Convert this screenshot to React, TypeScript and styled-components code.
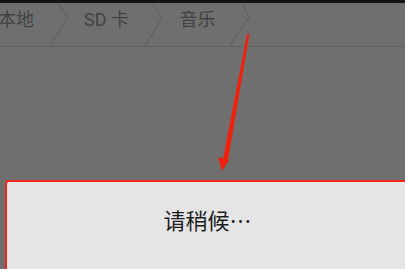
import styled, { createGlobalStyle } from "styled-components";

const GlobalStyle = createGlobalStyle`
  html, body {
    margin: 0;
    padding: 0;
    background: #6f6f6f;
  }
`;

const Screen = styled.div`
  position: relative;
  width: 405px;
  height: 269px;
  overflow: hidden;
  background: #6f6f6f;
  font-family: Roboto, "Noto Sans CJK SC", sans-serif;
`;

const PathBar = styled.nav`
  display: flex;
  align-items: stretch;
  height: 43px;
  border-top: 3px solid #141414;
  border-bottom: 1px solid #626262;
`;

const Crumb = styled.span<{ $w: number; $offset?: number }>`
  flex: none;
  width: ${(p) => p.$w}px;
  margin-left: ${(p) => p.$offset ?? 0}px;
  padding-top: 5px;
  line-height: 24px;
  font-size: 18px;
  color: #424242;
  text-align: center;
  white-space: nowrap;
`;

const Sep = styled.svg`
  flex: none;
  width: 26px;
  height: 43px;
`;

const Dialog = styled.div`
  margin: 133px 0 0 5px;
  width: 405px;
  height: 120px;
  background: #e5e5e5;
  border: 2px solid #f2291c;
  border-top-left-radius: 4px;
  box-sizing: border-box;
  padding-top: 23px;
  text-align: center;
`;

const Message = styled.div`
  font-family: "Noto Sans CJK SC", sans-serif;
  font-size: 22px;
  line-height: 28px;
  color: #1e1e1e;
`;

const Arrow = styled.svg`
  position: absolute;
  left: 0;
  top: 0;
  width: 405px;
  height: 269px;
  pointer-events: none;
`;

const Chevron = ({ top, peak, bottom }: { top: number; peak: [number, number]; bottom: number }) => (
  <Sep viewBox="0 0 26 43">
    <polyline
      points={`${top},0 ${peak[0]},${peak[1]} ${bottom},43`}
      fill="none"
      stroke="#5e5e5e"
      strokeWidth="1"
    />
  </Sep>
);

const App = () => (
  <>
    <GlobalStyle />
    <Screen>
      <PathBar>
        <Crumb $w={60} $offset={-14}>本地</Crumb>
        <Chevron top={11} peak={[22, 14]} bottom={4} />
        <Crumb $w={69}>SD 卡</Crumb>
        <Chevron top={12} peak={[21, 15]} bottom={4} />
        <Crumb $w={61}>音乐</Crumb>
        <Chevron top={14} peak={[21, 14]} bottom={2} />
      </PathBar>
      <Dialog>
        <Message>请稍候…</Message>
      </Dialog>
      <Arrow viewBox="0 0 405 269">
        <polygon points="247,34 249.5,34 228,160 223,159" fill="#f0200f" />
        <polygon points="218,157 229,160 222,171" fill="#f0200f" />
      </Arrow>
    </Screen>
  </>
);

export default App;
